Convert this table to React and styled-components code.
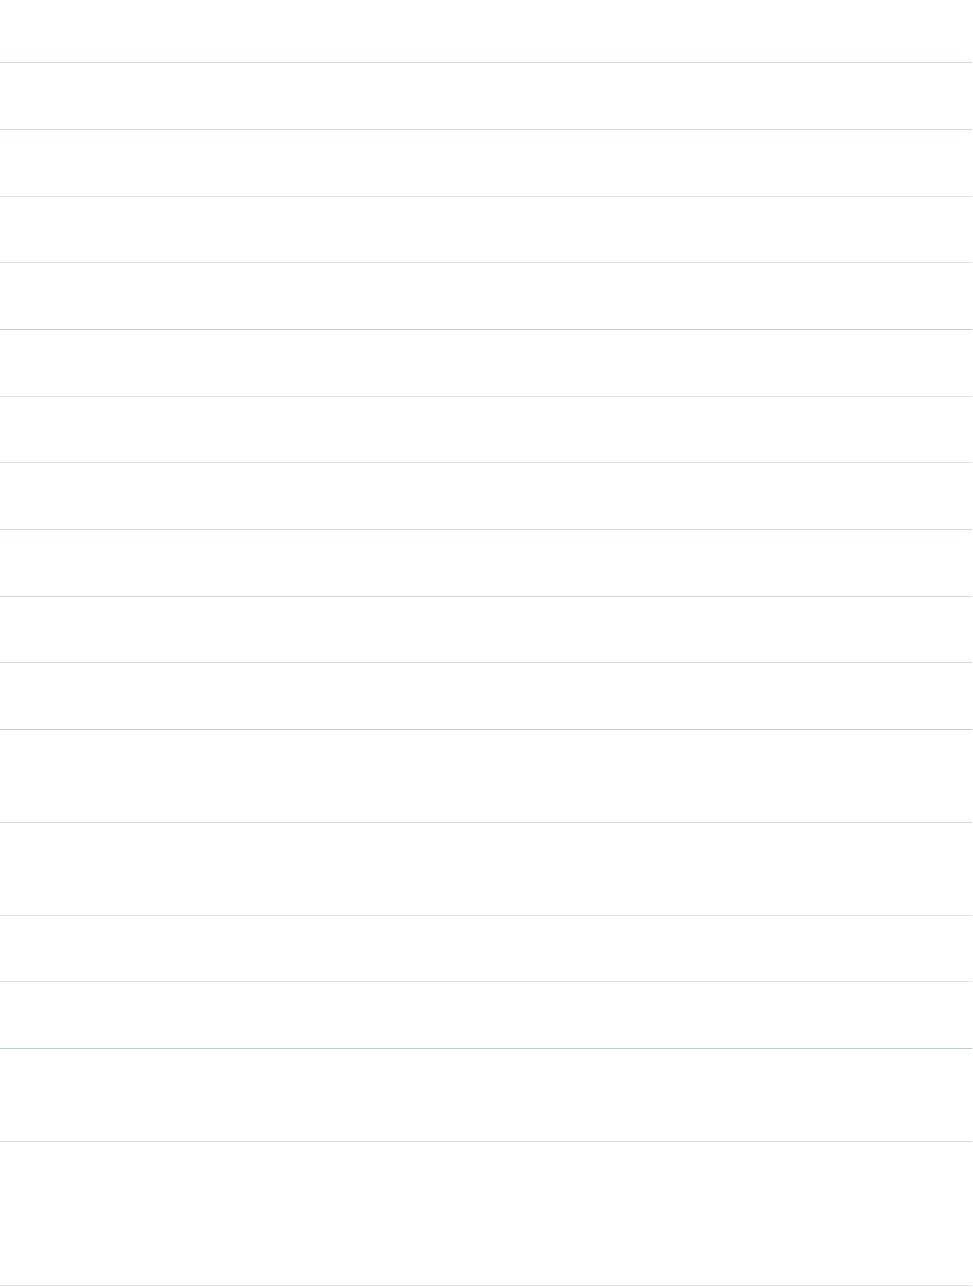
import React from "react";
import styled, { createGlobalStyle } from "styled-components";

const Global = createGlobalStyle`
  html, body { margin: 0; padding: 0; background: #ffffff; }
  body { font-family: "Liberation Sans", Arial, sans-serif; }
  * { box-sizing: border-box; }
`;

const Table = styled.div`
  width: 972px;
  display: flex;
  flex-direction: column;
`;

const tones = {
  dark: "#c4cdd5",
  teal: "#b9cbd2",
  mid: "#d2dce3",
  light: "#e2e6ea",
};

const Row = styled.div`
  height: ${(p) => p.$h}px;
  border-bottom: 1px solid ${(p) => tones[p.$tone]};
  display: flex;
  align-items: center;
`;

const rows = [
  [63, "mid"],
  [67, "mid"],
  [67, "light"],
  [66, "light"],
  [67, "dark"],
  [67, "light"],
  [66, "light"],
  [67, "mid"],
  [67, "mid"],
  [66, "mid"],
  [67, "dark"],
  [93, "mid"],
  [93, "light"],
  [66, "light"],
  [67, "teal"],
  [93, "mid"],
  [144, "light"],
];

export default function App() {
  return (
    <>
      <Global />
      <Table>
        {rows.map(([h, tone], i) => (
          <Row key={i} $h={h} $tone={tone} />
        ))}
      </Table>
    </>
  );
}
